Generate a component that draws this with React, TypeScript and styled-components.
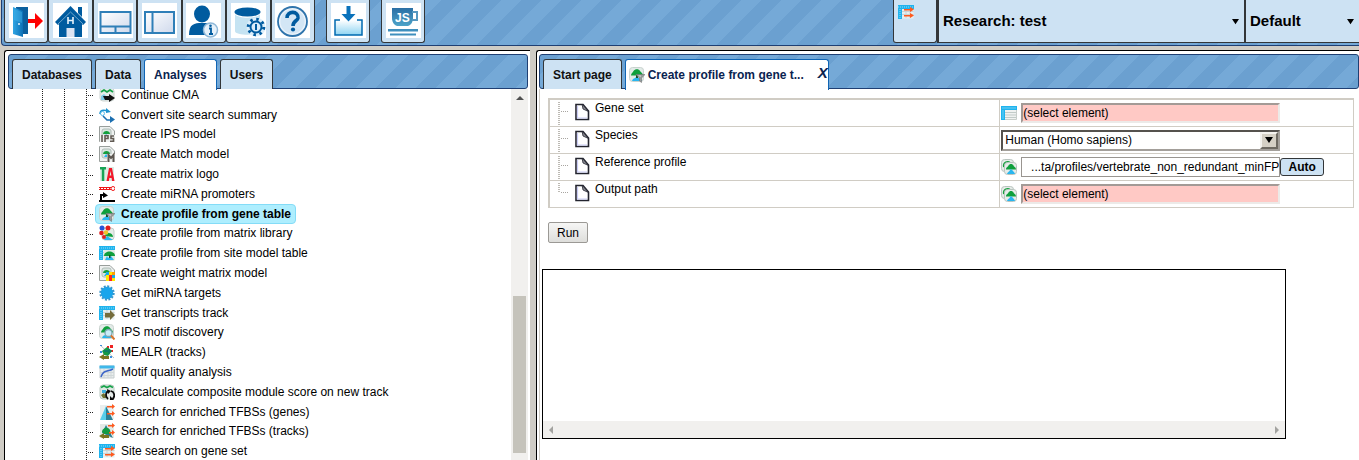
import React from 'react';
import styled, { createGlobalStyle, css } from 'styled-components';

const c = {
  frame: '#cfccc5',
  line: '#d0ccc4',
  navy: '#1f3f73',
  pale: '#cde2f3',
  edge: '#333638',
  track: '#f1f0ee',
  thumb: '#c5c3bb',
  blue: '#005b9f',
};

const Global = createGlobalStyle`
  *, *::before, *::after { box-sizing: border-box; }
  body { margin: 0; background: ${c.frame}; color: #000; font: 12px/16px "Liberation Sans", Arial, sans-serif; overflow: hidden; }
  button, input, select, textarea { font: inherit; color: inherit; margin: 0; }
  svg { display: block; flex: none; }
`;

const stripes = css`
  background: linear-gradient(135deg, #6ba0d0 25%, #75a9d7 25% 50%, #6ba0d0 50% 75%, #75a9d7 75%) 0 0 / 40px 40px;
`;

const Page = styled.div`
  display: flex;
  flex-direction: column;
  height: 100vh;
`;

/* ---------- top bar ---------- */
const Toolbar = styled.header`
  ${stripes}
  flex: none;
  display: flex;
  align-items: flex-start;
  height: 46px;
  margin-left: 1px;
  padding-left: 2px;
  border: solid ${c.navy};
  border-width: 0 0 1px 1px;
  border-radius: 0 0 0 4px;
`;
const ToolGroup = styled.div`
  display: grid;
  grid-template-columns: repeat(7, 1fr);
  width: 311px;
  margin-right: 11px;
`;
const ToolButton = styled.button`
  display: flex;
  justify-content: center;
  min-width: 44px;
  height: 43px;
  padding: 3px 0 0;
  background: ${c.pale};
  border: 1px solid ${c.edge};
  border-top: 0;
  border-radius: 0 0 3px 3px;
`;
const ToolFace = styled.span`
  display: block;
  width: 35px;
  height: 35px;
  background: #fff;
`;
const Single = styled.div`
  margin-right: 11px;
`;
const Projects = styled.div`
  display: flex;
  margin-left: auto;
`;
const ProjectIcon = styled.div`
  width: 44px;
  height: 43px;
  padding: 4px;
  background: ${c.pale};
  border: solid ${c.edge};
  border-width: 0 1px 1px;
  border-radius: 0 0 3px 3px;
`;
const PickerBox = styled.label<{ $w: number }>`
  display: flex;
  align-items: center;
  width: ${(p) => p.$w}px;
  height: 43px;
  padding-right: 5px;
  background: ${c.pale};
  border: solid ${c.edge};
  border-width: 0 0 1px 2px;
`;
const Picker = styled.select`
  flex: 1;
  min-width: 0;
  height: 40px;
  padding: 0 0 0 4px;
  appearance: none;
  background: transparent;
  border: 0;
  font-size: 15px;
  font-weight: bold;
`;

/* ---------- panes ---------- */
const Panes = styled.div`
  flex: 1;
  min-height: 0;
  display: flex;
  gap: 6px;
  padding: 4px 0 0 4px;
`;
const Pane = styled.section<{ $w?: number }>`
  display: flex;
  flex-direction: column;
  flex: ${(p) => (p.$w ? `0 0 ${p.$w}px` : '1 1 0')};
  min-width: 0;
  padding: 3px ${(p) => (p.$w ? 2 : 0)}px 0 ${(p) => (p.$w ? 3 : 2)}px;
  background: #fff;
  border: solid #000;
  border-width: 1px 0 0 1px;
  border-radius: 3px 0 0 0;
`;
const TabBar = styled.div`
  ${stripes}
  flex: none;
  display: flex;
  gap: 3px;
  height: 35px;
  padding: 4px 0 0 3px;
  border: 1px solid ${c.navy};
  border-radius: 3px;
`;
const Tab = styled.button<{ $active?: boolean }>`
  display: flex;
  align-items: center;
  height: ${(p) => (p.$active ? 31 : 30)}px;
  padding: 0 9px;
  background: ${(p) => (p.$active ? '#fff' : c.pale)};
  border: 1px solid ${(p) => (p.$active ? '#1065b4' : c.edge)};
  border-bottom: 0;
  border-radius: 3px 3px 0 0;
  color: ${(p) => (p.$active ? '#0a2350' : '#111')};
  font-weight: bold;
`;
const DocTab = styled(Tab).attrs({ as: 'div', $active: true })`
  width: 204px;
  padding: 0 0 0 3px;
`;
const DocTitle = styled.button`
  display: flex;
  align-items: center;
  gap: 3px;
  padding: 0;
  background: none;
  border: 0;
  font-weight: bold;
  white-space: nowrap;
`;
const Close = styled.button`
  margin: 0 0 4px auto;
  padding: 0;
  background: none;
  border: 0;
  font-size: 15px;
  font-weight: bold;
  font-style: italic;
`;

/* ---------- analysis tree ---------- */
const TreeArea = styled.div`
  flex: 1;
  min-height: 0;
  display: flex;
  overflow: hidden;
`;
const dots = 'repeating-linear-gradient(to bottom, #222 0 1px, transparent 1px 2px)';
const TreeScroll = styled.div`
  flex: 1;
  overflow: hidden;
  background-image: ${dots}, ${dots}, ${dots};
  background-repeat: no-repeat;
  background-size: 1px 100%;
  background-position: 34px 0, 56px 0, 78px 0;
`;
const Tree = styled.ul`
  display: grid;
  grid-auto-rows: minmax(0, 1fr);
  height: 376px;
  margin: -4px 0 0;
  padding: 0 0 0 80px;
  list-style: none;
`;
const TreeItem = styled.li`
  display: flex;
  align-items: center;
  &::before {
    content: '';
    width: 6px;
    height: 1px;
    margin: 2px 1px 0 0;
    background: repeating-linear-gradient(to right, #222 0 1px, transparent 1px 2px);
  }
`;
const TreeLink = styled.a<{ $on?: boolean }>`
  display: flex;
  align-items: center;
  gap: 6px;
  height: 20px;
  padding: 0 4px 0 3px;
  border: 1px solid ${(p) => (p.$on ? '#84dcf7' : 'transparent')};
  border-radius: 4px;
  background: ${(p) => (p.$on ? '#aeeefe' : 'transparent')};
  color: #000;
  font-weight: ${(p) => (p.$on ? 'bold' : 'normal')};
  text-decoration: none;
  white-space: nowrap;
`;
const ScrollTrack = styled.div`
  display: flex;
  flex-direction: column;
  justify-content: space-between;
  align-items: center;
  width: 17px;
  padding: 5px 0 7px;
  background: ${c.track};
`;
const Thumb = styled.div`
  width: 13px;
  height: 157px;
  background: ${c.thumb};
`;

/* ---------- parameter form ---------- */
const Form = styled.form`
  flex: 1;
  min-height: 0;
  padding: 9px 5px 0 2px;
  border: solid ${c.line};
  border-width: 0 0 0 1px;
`;
const Params = styled.table`
  width: calc(100% - 6px);
  margin: 0 0 14px 6px;
  table-layout: fixed;
  border-collapse: separate;
  border-spacing: 0;
  border: solid ${c.line};
  border-width: 2px 0 0 2px;
`;
const NameCell = styled.th`
  width: 56%;
  height: 27px;
  padding: 0;
  border: solid ${c.line};
  border-width: 0 1px 1px 0;
  font-weight: normal;
  text-align: left;
`;
const ValueCell = styled.td`
  padding: 0;
  border: solid ${c.line};
  border-width: 0 1px 1px 0;
`;
const NameRow = styled.div`
  display: flex;
  height: 26px;
  padding-left: 8px;
`;
const DocMark = styled.span`
  padding-top: 3px;
`;
const Label = styled.label`
  margin-left: 5px;
`;
const ValueRow = styled.div`
  display: flex;
  align-items: center;
  padding-left: 1px;
`;
const Field = styled.input<{ $empty?: boolean }>`
  width: 259px;
  height: 20px;
  margin-left: 4px;
  padding: 0;
  background: ${(p) => (p.$empty ? '#ffc9c5' : '#fff')};
  border: ${(p) => (p.$empty ? '2px solid' : '1px solid #999590')};
  ${(p) => p.$empty && 'border-color: #a39a96 #eceae8 #eceae8 #a39a96;'}
  text-align: ${(p) => (p.$empty ? 'left' : 'right')};
`;
const SelectBox = styled.div`
  display: flex;
  width: 279px;
  height: 21px;
  border: 2px solid;
  border-color: #55524e #a39f9a #a39f9a #55524e;
`;
const SpeciesSelect = styled.select`
  flex: 1;
  height: 17px;
  padding: 0 0 0 2px;
  appearance: none;
  background: #fff;
  border: 0;
`;
const DropKnob = styled.span`
  display: flex;
  align-items: center;
  justify-content: center;
  width: 18px;
  height: 17px;
  background: #d5d0c5;
  border: 2px solid;
  border-color: #f4f2ee #6e6a62 #6e6a62 #f4f2ee;
`;
const AutoButton = styled.button`
  width: 44px;
  height: 18px;
  padding: 0;
  background: ${c.pale};
  border: 1px solid ${c.edge};
  border-radius: 3px;
  font-weight: bold;
  line-height: 16px;
`;
const RunButton = styled.button`
  display: block;
  width: 40px;
  height: 21px;
  margin: 0 0 26px 6px;
  padding: 0;
  background: linear-gradient(#f6f6f5, #dededb);
  border: 1px solid #9b9995;
  border-radius: 2px;
`;
const Console = styled.div`
  width: 744px;
  max-width: 100%;
  border: 1px solid #000;
`;
const ConsoleText = styled.textarea`
  display: block;
  width: 100%;
  height: 151px;
  padding: 2px;
  border: 0;
  outline: 0;
  resize: none;
`;
const ConsoleScroll = styled.div`
  display: flex;
  align-items: center;
  justify-content: space-between;
  height: 17px;
  padding: 0 4px;
  background: ${c.track};
`;

/* ---------- drawings ---------- */
const Arrow = ({ dir, fill = '#000', s = 8 }: { dir: 'up' | 'down' | 'left' | 'right'; fill?: string; s?: number }) => {
  const d = { up: 'M0 6 4 2 8 6Z', down: 'M0 1H8L4 7Z', left: 'M6 0V8L2 4Z', right: 'M2 0V8L6 4Z' }[dir];
  return (
    <svg width={s} height={s} viewBox="0 0 8 8" aria-hidden="true">
      <path d={d} fill={fill} />
    </svg>
  );
};

const Tool = ({ children }: { children: React.ReactNode }) => (
  <ToolFace>
    <svg width="35" height="35" viewBox="0 0 35 35" aria-hidden="true">
      <defs>
        <linearGradient id="door" x2="1"><stop stopColor="#2fa5e4" /><stop offset="1" stopColor="#0b6fb5" /></linearGradient>
        <linearGradient id="tray" y2="1" x2="0"><stop stopColor="#fff" /><stop offset="1" stopColor="#8fd4f2" /></linearGradient>
        <linearGradient id="pane" y2="1" x2="1"><stop stopColor="#fff" /><stop offset="1" stopColor="#cfd9ec" /></linearGradient>
        <linearGradient id="cup" y2="1" x2="0"><stop stopColor="#2a6fa5" /><stop offset="1" stopColor="#4da3c8" /></linearGradient>
      </defs>
      {children}
    </svg>
  </ToolFace>
);

const tools: [string, React.ReactNode][] = [
  ['Log out', <>
    <path d="M7 4H19V31H9Z" fill="#0a5f9e" />
    <path d="M4 4 14 8V34L4 31Z" fill="url(#door)" />
    <path d="M5 6 13 9V20L5 17Z" fill="#45b5ec" opacity=".45" />
    <circle cx="10" cy="21" r="1" fill="#e8f6ff" />
    <path d="M19 16H26V10L34 18 26 26V20H19Z" fill="#f00" />
  </>],
  ['Home', <>
    <path d="M6 18V34H29V18L17.500 8Z" fill={c.blue} />
    <path d="M17.500 3 33 19 30 22 17.500 10 5 22 2 19Z" fill={c.blue} />
    <path d="M25 4H29V14L25 10Z" fill={c.blue} />
    <path d="M5 21 17.500 9 30 21" fill="none" stroke="#6ea5cb" />
    <path d="M15 14V21M20 14V21M15 17.500H20" stroke="#e8f2fa" strokeWidth="1.600" />
    <rect x="13.500" y="25" width="8" height="9" fill="#dbe3f2" />
  </>],
  ['Horizontal split', <>
    <rect x="2.500" y="9" width="30" height="21" fill="url(#pane)" stroke="#2f7fb8" strokeWidth="2" />
    <path d="M2 23.500H33M17.500 23.500V30" stroke="#2f7fb8" strokeWidth="2" />
  </>],
  ['Vertical split', <>
    <rect x="3" y="9" width="29" height="21" fill="url(#pane)" stroke="#2f7fb8" strokeWidth="2" />
    <path d="M10.500 9V30" stroke="#2f7fb8" strokeWidth="2" />
  </>],
  ['User information', <>
    <ellipse cx="16" cy="11" rx="8" ry="8.500" fill={c.blue} />
    <path d="M3 32C3 21 8 20 16 20S29 21 29 32Z" fill={c.blue} />
    <circle cx="24.500" cy="27" r="7" fill="#e6f1fa" stroke="#8fb8d8" strokeWidth="1.500" />
    <path d="M23 25.500H25V31M23 31H27" fill="none" stroke={c.blue} strokeWidth="1.800" />
    <circle cx="24.500" cy="22.700" r="1.300" fill={c.blue} />
  </>],
  ['Database settings', <>
    <path d="M4 8V28C4 33 29 33 29 28V8Z" fill="#c5e3f2" />
    <path d="M4 11C7 16 26 16 29 11V8H4Z" fill="#fff" />
    <ellipse cx="16.500" cy="9" rx="13" ry="4.500" fill={c.blue} />
    <circle cx="25" cy="24" r="9.500" fill="#dceefa" />
    <circle cx="25" cy="24" r="5.500" fill="#dceefa" stroke={c.blue} strokeWidth="2" />
    <circle cx="25" cy="24" r="7.800" fill="none" stroke={c.blue} strokeWidth="3" strokeDasharray="2.500 3.626" />
    <path d="M25 21V27" stroke={c.blue} strokeWidth="2" />
  </>],
  ['Help', <>
    <circle cx="17.500" cy="18.500" r="14.500" fill="#e9f2fa" stroke="#2f74ac" strokeWidth="1.800" />
    <circle cx="17.500" cy="18.500" r="12" fill="#d3e6f5" />
    <path d="M12 15C12 7 24 8 23 15 22.500 18 18 18 18 23" fill="none" stroke={c.blue} strokeWidth="3.600" />
    <circle cx="18" cy="26.500" r="2.100" fill={c.blue} />
  </>],
];

const importTool = (
  <>
    <path d="M9 17H4V32H31V17H26" fill="url(#tray)" stroke="#0069b0" strokeWidth="1.500" />
    <path d="M15.500 3H19.500V11H24.500L17.500 18.500 10.500 11H15.500Z" fill="#0a72bb" />
  </>
);
const scriptTool = (
  <>
    <path d="M6 5H27V15C27 19 25 22 22 23H11C8 22 6 19 6 15Z" fill="url(#cup)" />
    <path d="M26 9H31V17H26" fill="none" stroke="#5597c0" strokeWidth="2" />
    <text x="9" y="19" fontSize="12" fontWeight="bold" fill="#fff" fontFamily="Liberation Sans, sans-serif">JS</text>
    <path d="M2 26H32V28.500H2ZM4 30.500H30V32.500H4Z" fill="#3f8fbd" />
  </>
);

const Icon = ({ children }: { children: React.ReactNode }) => (
  <svg width="16" height="16" viewBox="0 0 16 16" aria-hidden="true">{children}</svg>
);
const Card = () => <rect x=".500" y=".500" width="14" height="14" rx="3" fill="#e3ebe8" stroke="#c9d2ce" strokeWidth="1" />;
const Tree1 = () => (
  <>
    <path d="M2 8.500C2 6 4 5.500 4.500 4 6 1.500 10 1.500 11 4 12 5.500 14 6 14 8.500Z" fill="#0f9f3c" />
    <path d="M3 14C4 10.500 6 12 7 10H9C10 12 11 11 13 14Z" fill="#29b6ef" />
    <path d="M7 8H9V11H7Z" fill="#14512a" />
  </>
);
const Sheet = () => (
  <>
    <path d="M.500.500H11L15.500 5V15.500H.500Z" fill="#eef1f0" stroke="#999f9c" />
    <rect x="3" y="3" width="9" height="9" rx="2" fill="#d8e4e0" stroke="#aebbb6" />
    <path d="M4 8C4 4 11 4 11 8Z" fill="#14a03c" />
    <path d="M5 11 7 8 10 11Z" fill="#29b6ef" />
  </>
);
const Grid = () => (
  <>
    <path d="M.500 1.500H15.500V14.500H.500Z" fill="#e6eeef" />
    <path d="M4 7.500H15.500M4 10.500H15.500M8 5V14M12 5V14" stroke="#c6d3d6" strokeWidth="1" />
    <path d="M0 1H16V5H4V15H0Z" fill="#1fb3ee" />
    <path d="M0 3H16M2 5V15" stroke="#8edcf8" strokeWidth="1" strokeDasharray="1 1" />
  </>
);
const Hits = () => (
  <path d="M6 5H12V3L16 5.500 12 8V6.500H6ZM6 11H12V9L16 11.500 12 14V12.500H6Z" fill="#ff5a1f" />
);
const ProfileStack = () => (
  <Icon>
    <rect x=".500" y=".500" width="12" height="12" rx="3" fill="#e6ece9" stroke="#b9c4bf" />
    <path d="M3 8C2 3 7 2 9 4" fill="none" stroke="#14a03c" strokeWidth="2" />
    <rect x="3.500" y="3.500" width="12" height="12" rx="3" fill="#e6ece9" stroke="#b9c4bf" />
    <path d="M5 10.500C5 8 7 8 7.500 6.500 8.500 4.500 11.500 4.500 12.500 6.500 13 8 15 8 15 10.500Z" fill="#0f9f3c" />
    <path d="M6 15C7 12 9 13 9 10.500H11C12 13 13 12 14 15Z" fill="#29b6ef" />
  </Icon>
);
const ProfileFunnel = () => (
  <Icon>
    <Card /><Tree1 />
    <path d="M7 7.500H16L12.500 11V15.500L10.500 14V11Z" fill="#9a9c9c" stroke="#777" strokeWidth=".600" />
    <path d="M9 8.500H12L11.500 10Z" fill="#d9dada" />
  </Icon>
);
const TableHits = () => (
  <Icon><Grid /><Hits /></Icon>
);
const TableIcon = () => (
  <Icon>
    <path d="M.500 1.500H15.500V14.500H.500Z" fill="#f0f2f1" stroke="#c8ceca" />
    <path d="M4 7.500H15M4 10H15M4 12.500H15" stroke="#c2cbc8" strokeWidth="1" />
    <path d="M0 1H16V5H4V15H0Z" fill="#1fb3ee" />
    <path d="M1 3H15M2 5V14" stroke="#6fd0f5" strokeWidth="1" />
  </Icon>
);
const DocIcon = () => (
  <svg width="16" height="18" viewBox="0 0 16 18" aria-hidden="true">
    <path d="M2 1.500H9L14.500 8V16.500H2Z" fill="#fff" stroke="#23242e" strokeWidth="1.600" />
    <path d="M3.500 3V15H13" fill="none" stroke="#c9cbf5" strokeWidth="1.200" />
    <path d="M8 1 9 6 14.500 8.500Z" fill="#8a8b93" stroke="#23242e" strokeWidth=".800" />
  </svg>
);
const Joint = ({ last }: { last?: boolean }) => (
  <svg width="16" height="26" viewBox="0 0 16 26" aria-hidden="true">
    <path d={last ? 'M1 2V12' : 'M1 2V25'} stroke="#bdbab4" strokeWidth="2" strokeDasharray="1 1" />
    <path d="M3 11.500H10" stroke="#a8a5a0" strokeWidth="1" strokeDasharray="1 1" />
  </svg>
);

const dna = (
  <>
    <path d="M1 1 15 14" stroke="#b9c4c4" strokeWidth="1" />
    <path d="M8 2H10V4H8ZM11 1H14V4H11ZM12 6H14V8H12Z" fill="#e22" />
    <path d="M1 7H3V9H1ZM11 12H13V14H11ZM1 1H3V2H1Z" fill="#3d8fe0" />
    <path d="M3 7 8 3 13 7 9 12 5 11Z" fill="#139a43" />
    <path d="M5 6H9V4L13 7 9 10V8H5Z" fill="#0d7e64" />
    <path d="M0 13 5 10V12H10V15H5V16Z" fill="#7a7420" />
  </>
);

const items: [string, React.ReactNode][] = [
  ['Continue CMA', <>
    <rect x="1" y="1" width="14" height="13" rx="3" fill="#e6ece9" stroke="#cdd5d2" />
    <path d="M2 5 5 3 8 5 11 3 14 5" fill="none" stroke="#16a34a" strokeWidth="1.800" />
    <path d="M2 9 5 7 8 10V13H2Z" fill="#7fcbe6" />
    <path d="M4 9H10V7L16 11 10 15V13H6Z" fill="#111" />
  </>],
  ['Convert site search summary', <>
    <path d="M1 7C1 3 4 2.500 9 4" fill="none" stroke="#2094cf" strokeWidth="1.500" />
    <path d="M7 1 12 5 7 6Z" fill="#2094cf" />
    <circle cx="3.500" cy="6.500" r="2" fill="none" stroke="#58bdec" />
    <path d="M4 9 8 13H13" fill="none" stroke="#1c6fb0" strokeWidth="1.600" />
    <path d="M11 9 16 12.500 11 16Z" fill="#1c6fb0" />
  </>],
  ['Create IPS model', <>
    <Sheet />
    <path d="M1 9H16V16H1Z" fill="#eef1f0" />
    <path d="M3 9V16M6 16V9.800H9V12.500H6.500M15 10H12V12.500H14.500V15.200H11" fill="none" stroke="#625b54" strokeWidth="1.600" />
  </>],
  ['Create Match model', <>
    <Sheet />
    <path d="M8 8H16V16H8Z" fill="#eef1f0" />
    <path d="M9.500 16V9L12 12 14.500 9V16" fill="none" stroke="#5d5751" strokeWidth="2" />
  </>],
  ['Create matrix logo', <>
    <path d="M1 1H15V15H1Z" fill="#dcece4" />
    <path d="M1 1H7V3.500H5.300V15H2.800V3.500H1Z" fill="#17a355" />
    <path d="M7.500 15 10 2H13L15.500 15H13L12.600 12H10.300L9.900 15ZM10.700 9.500H12.300L11.500 5Z" fill="#f2182a" fillRule="evenodd" />
  </>],
  ['Create miRNA promoters', <>
    <path d="M0 1.500H12M0 3.500H12" stroke="#f01818" strokeWidth="1" />
    <path d="M1 2.500H12" stroke="#f01818" strokeWidth="1" strokeDasharray="1 2" />
    <circle cx="14" cy="2.500" r="2" fill="#fff" stroke="#f01818" />
    <path d="M0 14H16V16H0Z" fill="#000" />
    <path d="M1 14V8H4V6L9 9.500 4 12V10H3V14Z" fill="#000" />
  </>],
  ['Create profile from gene table', null],
  ['Create profile from matrix library', <>
    <rect x="3" y="3" width="12" height="12" rx="3" fill="#e6ece9" stroke="#c3cdc9" />
    <path d="M5 15 8 11 14 15Z" fill="#29b6ef" />
    <path d="M6 11C6 7 14 7 14 12Z" fill="#0f9f3c" />
    <circle cx="3" cy="3" r="2.500" fill="#2656d8" /><circle cx="9" cy="3" r="2.500" fill="#e01d1d" />
    <circle cx="2.500" cy="8" r="2.300" fill="#e01d1d" /><circle cx="7" cy="7.500" r="2.300" fill="#f0c52a" />
    <circle cx="5" cy="12" r="2" fill="#d22" />
  </>],
  ['Create profile from site model table', <>
    <Grid />
    <rect x="5" y="5" width="11" height="11" rx="2" fill="#dfe9e6" />
    <path d="M5 11C5 5 16 5 16 11Z" fill="#0f9f3c" />
    <path d="M6 15 8 11 9 13 12 11 15 15Z" fill="#29b6ef" /><path d="M10 10H11.500V13H10Z" fill="#14512a" />
  </>],
  ['Create weight matrix model', <>
    <Sheet />
    <path d="M7 7H16V16H7Z" fill="#f22" />
    <path d="M10 7H13V10H10ZM7 13H10V16H7Z" fill="#ffe900" /><path d="M7 10H10V13H7ZM13 13H16V16H13Z" fill="#ffe900" />
    <path d="M7 7H10V10H7ZM13 10H16V13H13Z" fill="#18a8e8" /><path d="M13 7H16V10H13Z" fill="#ff9d00" />
  </>],
  ['Get miRNA targets', <>
    <circle cx="8" cy="8" r="6.200" fill="#17a5ec" />
    <circle cx="8" cy="8" r="6.600" fill="none" stroke="#3397cf" strokeWidth="2.200" strokeDasharray="2 1.456" />
  </>],
  ['Get transcripts track', <>
    <Grid />
    <path d="M6 8H11V5L16 10 11 15V12.500H6Z" fill="#756c3c" />
  </>],
  ['IPS motif discovery', <>
    <Card /><Tree1 />
    <circle cx="9.500" cy="9" r="3.500" fill="#c9edf8" stroke="#7fa6b2" strokeWidth="1.300" />
    <path d="M12 11.500 15.500 15.500" stroke="#d8742c" strokeWidth="2" />
  </>],
  ['MEALR (tracks)', dna],
  ['Motif quality analysis', <>
    <path d="M1 2H15V14H1Z" fill="#e8ecec" stroke="#c6cdce" />
    <path d="M1 8.500H15M1 11.500H15M5 5V14M9 5V14M12 5V14" stroke="#d0d7d8" />
    <path d="M.500 1.500H15.500V4.500H.500Z" fill="#3fb8ea" />
    <path d="M2 13C4 6 8 8 14 5" fill="none" stroke="#3b64c8" strokeWidth="1.500" />
  </>],
  ['Recalculate composite module score on new track', <>
    <rect x="1" y="1" width="14" height="14" rx="3" fill="#dfe9e4" stroke="#b9c9c0" />
    <path d="M2 3.500 5 2 8 3.500 11 2 14 3.500" fill="none" stroke="#16a34a" strokeWidth="1.800" />
    <path d="M3 6H7V9H3Z" fill="#3fb0dd" /><path d="M2 11 5 9 8 14H4Z" fill="#6e7030" />
    <circle cx="11.500" cy="11" r="4.500" fill="#e7ecea" />
    <path d="M9 15C5 11 8 7 10 7M12 7C16 8 16 13 13.500 15" fill="none" stroke="#0a0a0a" strokeWidth="1.800" />
    <path d="M8 5 12 7 9 10ZM15 16H11V12Z" fill="#0a0a0a" />
  </>],
  ['Search for enriched TFBSs (genes)', <>
    <path d="M1 1H15V15H1Z" fill="#e9efef" />
    <path d="M7 2 1 16H8Z" fill="#56cdea" /><path d="M7 2 14 16H7Z" fill="#2a7f96" />
    <path d="M8 2H13V0L16 2.500 13 5V3.500H8ZM8 9H13V7L16 9.500 13 12V10.500H8Z" fill="#ff5a1f" />
  </>],
  ['Search for enriched TFBSs (tracks)', <>
    <path d="M1 1H15V15H1Z" fill="#e3eae6" />
    <path d="M7 2 3 10 14 15Z" fill="#2a7f96" />
    <path d="M3 9C3 5 9 3 11 7L12 11H5Z" fill="#139a43" />
    <path d="M0 13 5 10V12H10V15H5V16Z" fill="#7a7420" />
    <path d="M9 2H13V0L16 2.500 13 5V3.500H9ZM10 9H13V7L16 9.500 13 12V10.500H10Z" fill="#ff5a1f" />
  </>],
  ['Site search on gene set', <><Grid /><Hits /></>],
];

type Param = { id: string; label: string; control: React.ReactNode };

const params: Param[] = [
  { id: 'gene-set', label: 'Gene set', control: <><TableIcon /><Field id="gene-set" $empty defaultValue="(select element)" /></> },
  {
    id: 'species', label: 'Species', control: (
      <SelectBox>
        <SpeciesSelect id="species"><option>Human (Homo sapiens)</option></SpeciesSelect>
        <DropKnob><Arrow dir="down" /></DropKnob>
      </SelectBox>
    ),
  },
  {
    id: 'profile', label: 'Reference profile', control: (
      <>
        <ProfileStack />
        <Field id="profile" defaultValue="...ta/profiles/vertebrate_non_redundant_minFP" />
        <AutoButton type="button">Auto</AutoButton>
      </>
    ),
  },
  { id: 'output', label: 'Output path', control: <><ProfileStack /><Field id="output" $empty defaultValue="(select element)" /></> },
];

export default function App() {
  return (
    <Page>
      <Global />
      <Toolbar>
        <ToolGroup>
          {tools.map(([name, art]) => (
            <ToolButton key={name} aria-label={name}><Tool>{art}</Tool></ToolButton>
          ))}
        </ToolGroup>
        <Single><ToolButton aria-label="Import"><Tool>{importTool}</Tool></ToolButton></Single>
        <Single><ToolButton aria-label="Script"><Tool>{scriptTool}</Tool></ToolButton></Single>
        <Projects>
          <ProjectIcon><TableHits /></ProjectIcon>
          <PickerBox $w={307}>
            <Picker aria-label="Project"><option>Research: test</option></Picker>
            <Arrow dir="down" s={7} />
          </PickerBox>
          <PickerBox $w={115}>
            <Picker aria-label="Perspective"><option>Default</option></Picker>
            <Arrow dir="down" s={7} />
          </PickerBox>
        </Projects>
      </Toolbar>
      <Panes>
        <Pane $w={526}>
          <TabBar>
            <Tab>Databases</Tab>
            <Tab>Data</Tab>
            <Tab $active>Analyses</Tab>
            <Tab>Users</Tab>
          </TabBar>
          <TreeArea>
            <TreeScroll>
              <Tree>
                {items.map(([name, art]) => (
                  <TreeItem key={name}>
                    <TreeLink href="#" $on={!art}>
                      {art ? <Icon>{art}</Icon> : <ProfileFunnel />}
                      {name}
                    </TreeLink>
                  </TreeItem>
                ))}
              </Tree>
            </TreeScroll>
            <ScrollTrack>
              <Arrow dir="up" fill="#505050" />
              <Thumb />
            </ScrollTrack>
          </TreeArea>
        </Pane>
        <Pane>
          <TabBar>
            <Tab>Start page</Tab>
            <DocTab>
              <DocTitle><ProfileFunnel />Create profile from gene t...</DocTitle>
              <Close aria-label="Close tab">X</Close>
            </DocTab>
          </TabBar>
          <Form onSubmit={(e) => e.preventDefault()}>
            <Params>
              <tbody>
                {params.map((p, i) => (
                  <tr key={p.id}>
                    <NameCell scope="row">
                      <NameRow>
                        <Joint last={i === params.length - 1} />
                        <DocMark><DocIcon /></DocMark>
                        <Label htmlFor={p.id}>{p.label}</Label>
                      </NameRow>
                    </NameCell>
                    <ValueCell><ValueRow>{p.control}</ValueRow></ValueCell>
                  </tr>
                ))}
              </tbody>
            </Params>
            <RunButton>Run</RunButton>
            <Console>
              <ConsoleText aria-label="Log" readOnly />
              <ConsoleScroll>
                <Arrow dir="left" fill="#a3a3a0" />
                <Arrow dir="right" fill="#a3a3a0" />
              </ConsoleScroll>
            </Console>
          </Form>
        </Pane>
      </Panes>
    </Page>
  );
}
